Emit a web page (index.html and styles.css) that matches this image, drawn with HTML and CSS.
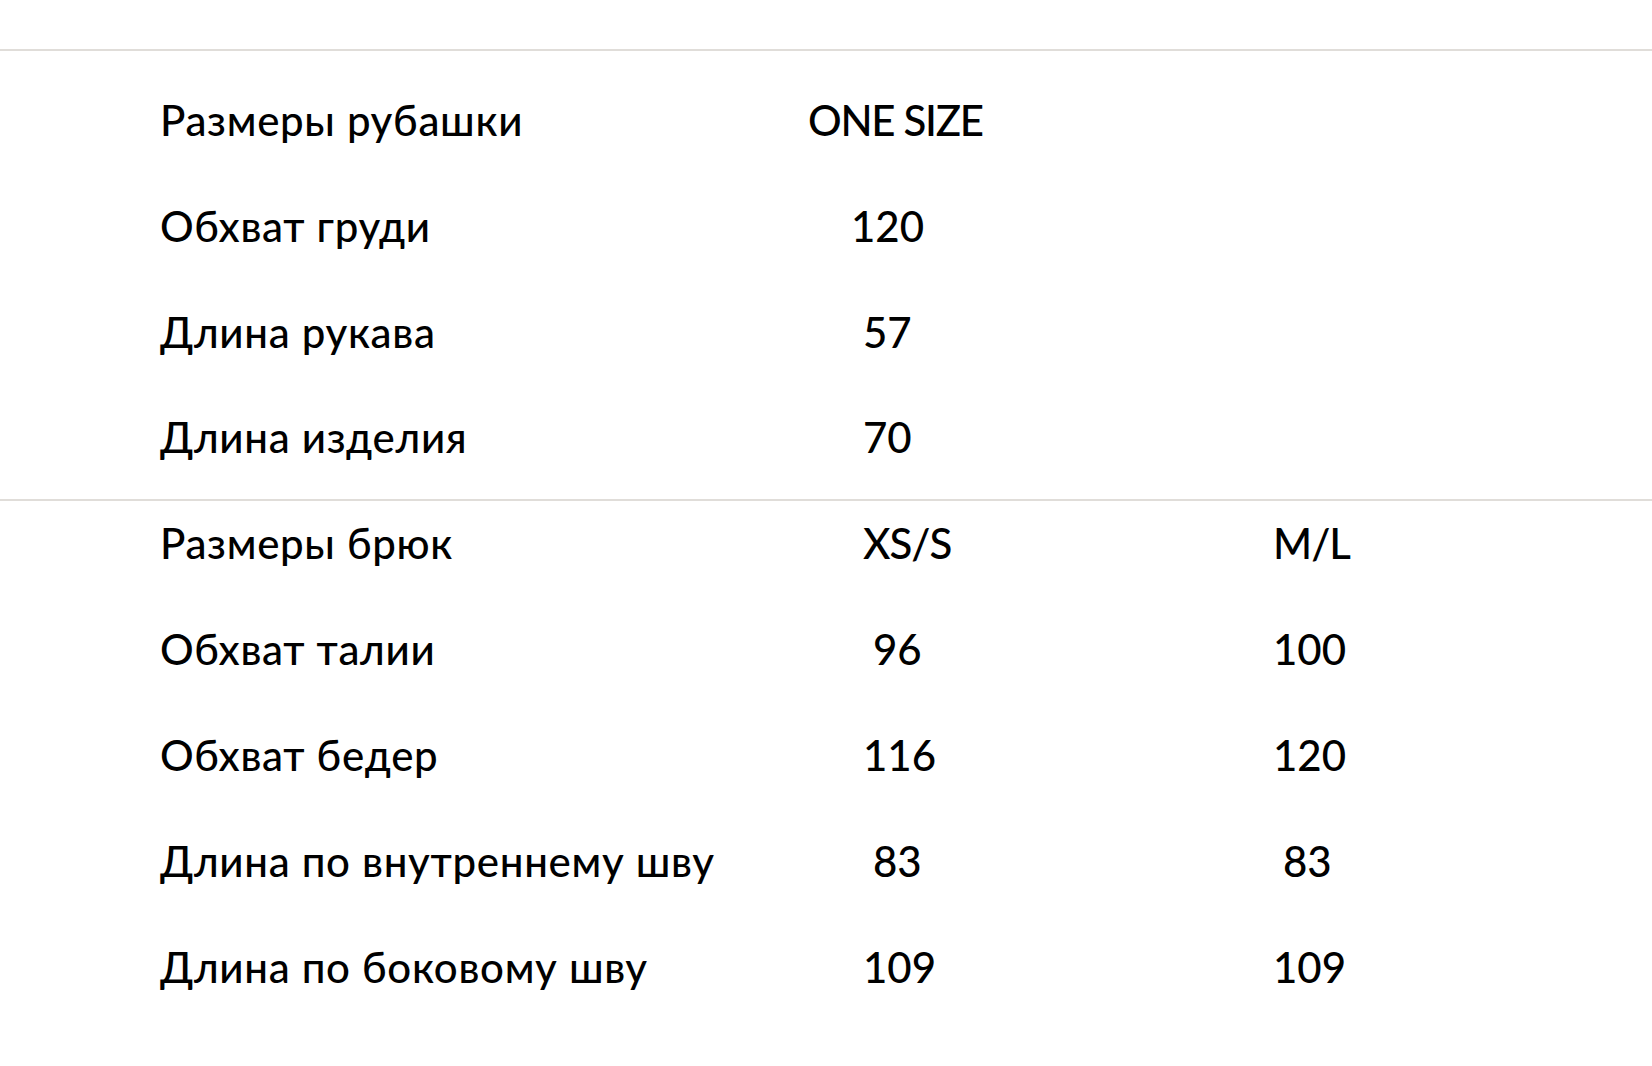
FILE: index.html
```html
<!DOCTYPE html>
<html lang="ru">
<head>
<meta charset="utf-8">
<title>Размеры</title>
<link rel="stylesheet" href="styles.css">
</head>
<body>
<main class="page">
  <div class="rule rule-top"></div>
  <section class="size-table">
    <div class="row"><span class="label">Размеры рубашки</span><span class="val val-wide">ONE SIZE</span><span class="val"></span></div>
    <div class="row"><span class="label">Обхват груди</span><span class="val val-120">120</span><span class="val"></span></div>
    <div class="row"><span class="label">Длина рукава</span><span class="val">57</span><span class="val"></span></div>
    <div class="row"><span class="label">Длина изделия</span><span class="val">70</span><span class="val"></span></div>
  </section>
  <div class="rule rule-mid"></div>
  <section class="size-table">
    <div class="row"><span class="label">Размеры брюк</span><span class="val caps">XS/S</span><span class="val caps">M/L</span></div>
    <div class="row"><span class="label">Обхват талии</span><span class="val indent">96</span><span class="val">100</span></div>
    <div class="row"><span class="label">Обхват бедер</span><span class="val">116</span><span class="val">120</span></div>
    <div class="row"><span class="label">Длина по внутреннему шву</span><span class="val indent">83</span><span class="val indent">83</span></div>
    <div class="row"><span class="label">Длина по боковому шву</span><span class="val">109</span><span class="val">109</span></div>
  </section>
</main>
</body>
</html>
```

FILE: styles.css
```css
html, body {
  margin: 0;
  padding: 0;
  background: #ffffff;
}

body {
  font-family: "Lato", "Open Sans", sans-serif;
  font-weight: 500;
  color: #000000;
}

.page {
  width: 100%;
}

.rule {
  height: 2px;
  background: #e0ddd9;
}

.rule-top {
  margin-top: 49px;
  margin-bottom: 25.4px;
}

.rule-mid {
  margin: -1px 0;
  position: relative;
}

.row {
  display: grid;
  grid-template-columns: 703px 410px 1fr;
  padding-left: 160px;
  padding-top: 22.35px;
  height: 105.9px;
  box-sizing: border-box;
  font-size: 42px;
  line-height: 42px;
  white-space: nowrap;
}

.label {
  letter-spacing: 0.7px;
}

.val-wide {
  margin-left: -55px;
  letter-spacing: -1.3px;
}

.caps {
  letter-spacing: -1px;
}

.val-120 {
  margin-left: -12px;
}

.indent {
  padding-left: 10px;
}
```
